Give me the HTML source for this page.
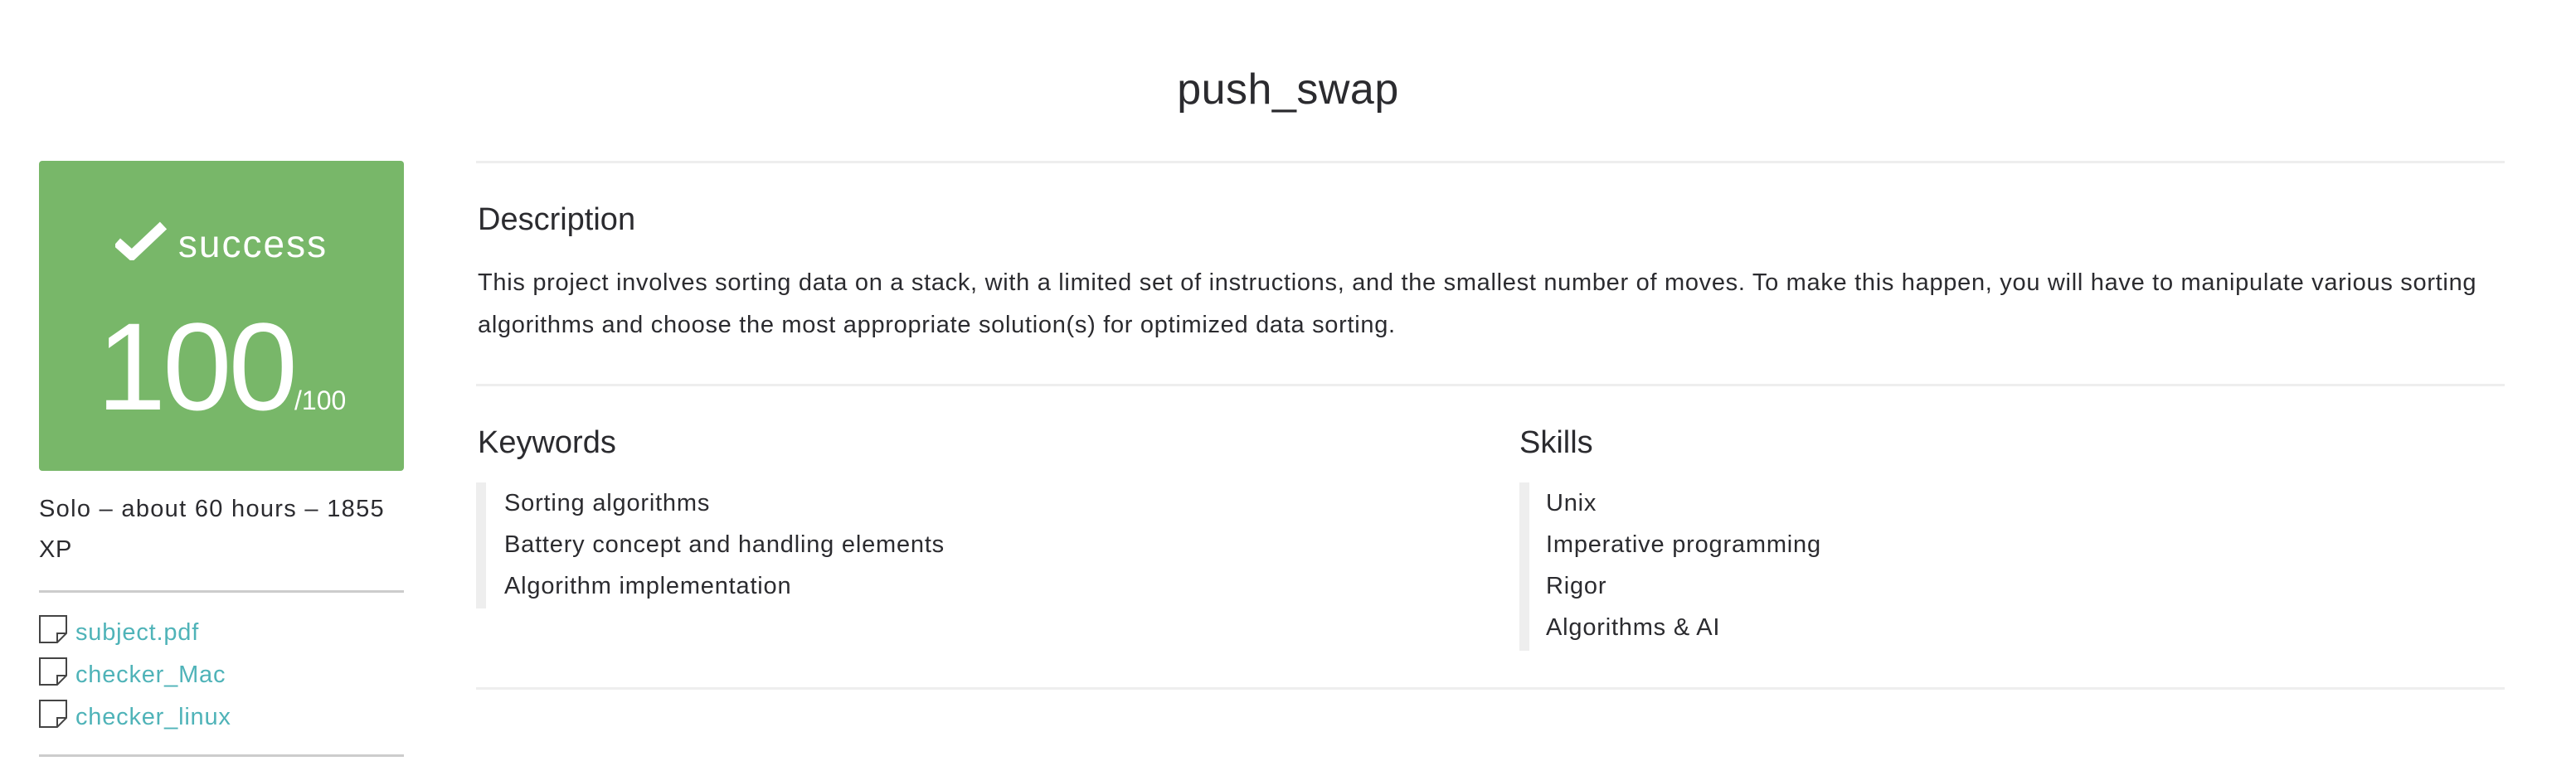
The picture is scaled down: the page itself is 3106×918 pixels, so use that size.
<!DOCTYPE html>
<html><head><meta charset="utf-8"><style>
body{margin:0;width:3106px;height:918px;background:#fff;font-family:"Liberation Sans",sans-serif;color:#2b2b2f;position:relative;overflow:hidden}
.a{position:absolute;white-space:nowrap}
.hr{position:absolute;height:3px;background:#eeeeee}
.t{font-size:29px;letter-spacing:0.7px}
.li{font-size:29px;letter-spacing:0.8px}
a{color:#4fb3b8;text-decoration:none}
.doc{display:inline-block;width:34px;height:34px;vertical-align:-4px;margin-right:10px}
</style></head><body>
<div class="a" style="left:0;width:3106px;text-align:center;top:78px;font-size:52px;letter-spacing:0.5px">push_swap</div>
<div class="hr" style="left:574px;width:2446px;top:194px"></div>
<div class="a" style="left:576px;top:244px;font-size:38px">Description</div>
<div class="a t" style="left:576px;top:325px">This project involves sorting data on a stack, with a limited set of instructions, and the smallest number of moves. To make this happen, you will have to manipulate various sorting</div>
<div class="a t" style="left:576px;top:376px;letter-spacing:0.7px">algorithms and choose the most appropriate solution(s) for optimized data sorting.</div>
<div class="hr" style="left:574px;width:2446px;top:463px"></div>
<div class="a" style="left:576px;top:513px;font-size:38px">Keywords</div>
<div class="a" style="left:1832px;top:513px;font-size:38px">Skills</div>
<div class="a" style="left:574px;top:582px;width:12px;height:152px;background:#eeeeee"></div>
<div class="a" style="left:1832px;top:582px;width:12px;height:203px;background:#eeeeee"></div>
<div class="a li" style="left:608px;top:591px">Sorting algorithms</div>
<div class="a li" style="left:608px;top:641px">Battery concept and handling elements</div>
<div class="a li" style="left:608px;top:691px">Algorithm implementation</div>
<div class="a li" style="left:1864px;top:591px">Unix</div>
<div class="a li" style="left:1864px;top:641px">Imperative programming</div>
<div class="a li" style="left:1864px;top:691px">Rigor</div>
<div class="a li" style="left:1864px;top:741px">Algorithms &amp; AI</div>
<div class="hr" style="left:574px;width:2446px;top:829px"></div>

<div class="a" style="left:47px;top:194px;width:440px;height:374px;background:#78b769;border-radius:4px;color:#fff">
 <div class="a" style="left:0;width:440px;text-align:center;top:68px;font-size:46px;letter-spacing:2px">
  <svg width="62" height="52" viewBox="0 0 62 52" style="vertical-align:-4px;margin-right:14px"><path d="M2 30 L20 46 L58 10" fill="none" stroke="#fff" stroke-width="12" stroke-linejoin="miter"/></svg>success</div>
 <div class="a" style="left:0;width:440px;text-align:center;top:168px;font-size:150px;line-height:160px;letter-spacing:-4px">100<span style="font-size:32px;letter-spacing:0">/100</span></div>
</div>
<div class="a t" style="left:47px;top:598px;letter-spacing:1.3px">Solo – about 60 hours – 1855</div>
<div class="a t" style="left:47px;top:647px">XP</div>
<div class="hr" style="left:47px;width:440px;top:712px;background:#ccc"></div>
<div class="a li" style="left:47px;top:742px"><svg class="doc" viewBox="0 0 34 34"><path d="M1 1H33V22L22 33H1Z M33 22H22V33" fill="none" stroke="#444" stroke-width="2"/></svg><a>subject.pdf</a></div>
<div class="a li" style="left:47px;top:793px"><svg class="doc" viewBox="0 0 34 34"><path d="M1 1H33V22L22 33H1Z M33 22H22V33" fill="none" stroke="#444" stroke-width="2"/></svg><a>checker_Mac</a></div>
<div class="a li" style="left:47px;top:844px"><svg class="doc" viewBox="0 0 34 34"><path d="M1 1H33V22L22 33H1Z M33 22H22V33" fill="none" stroke="#444" stroke-width="2"/></svg><a>checker_linux</a></div>
<div class="hr" style="left:47px;width:440px;top:910px;background:#ccc"></div>
</body></html>
